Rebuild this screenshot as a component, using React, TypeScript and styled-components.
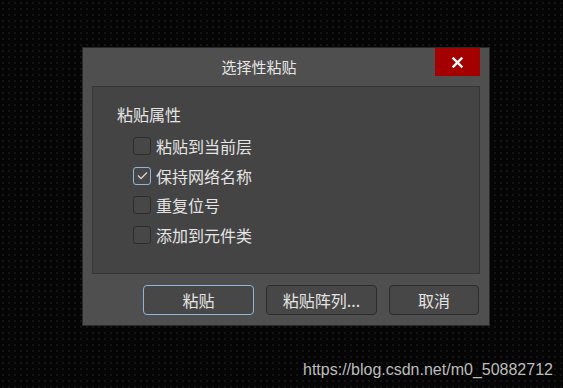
import React from "react";
import styled, { createGlobalStyle } from "styled-components";

const Global = createGlobalStyle`
  *, *::before, *::after { box-sizing: border-box; }
  html, body { margin: 0; padding: 0; }
  body {
    width: 563px;
    height: 388px;
    overflow: hidden;
    background-color: #050505;
    background-image: radial-gradient(circle, #141414 0.8px, transparent 1px);
    background-size: 6px 6px;
    font-family: "Noto Sans CJK SC", "Noto Sans", sans-serif;
  }
`;

const Page = styled.div`
  width: 563px;
  height: 388px;
  display: flex;
  flex-direction: column;
`;

const Dialog = styled.div`
  margin: 47px 0 0 82px;
  width: 408px;
  height: 279px;
  background: #4f4f4f;
  border: 1px solid #2a2a2a;
  display: flex;
  flex-direction: column;
  padding: 0 9px 0 9px;
`;

const TitleBar = styled.div`
  height: 38px;
  display: flex;
  align-items: flex-start;
  margin-left: -9px;
`;

const Title = styled.div`
  flex: 1;
  text-align: center;
  color: #e6e6e6;
  font-size: 15px;
  line-height: 20px;
  margin-top: 9px;
`;

const CloseButton = styled.div`
  width: 45px;
  height: 28px;
  background: #a50000;
  display: flex;
  align-items: center;
  justify-content: center;
`;

const GroupBox = styled.div`
  height: 188px;
  background: #444444;
  border: 1px solid #363636;
  padding: 17px 0 0 24px;
  display: flex;
  flex-direction: column;
`;

const GroupTitle = styled.div`
  color: #e4e4e4;
  font-size: 16px;
  line-height: 20px;
  margin-bottom: 13px;
`;

const List = styled.div`
  display: flex;
  flex-direction: column;
  gap: 11px;
  padding-left: 16px;
`;

const Row = styled.label`
  display: flex;
  align-items: center;
  gap: 5px;
  height: 18.5px;
  color: #e4e4e4;
  font-size: 16px;
`;

const Box = styled.span<{ $checked?: boolean }>`
  width: 18px;
  height: 18px;
  border-radius: 3px;
  background: #474747;
  border: 1px solid ${(p) => (p.$checked ? "#8fb6da" : "#2c2c2c")};
  display: flex;
  align-items: center;
  justify-content: center;
`;

const Buttons = styled.div`
  display: flex;
  justify-content: flex-end;
  gap: 12px;
  margin-top: 11px;
  padding-right: 1px;
`;

const Button = styled.div<{ $width: number; $default?: boolean }>`
  width: ${(p) => p.$width}px;
  height: 30px;
  border-radius: 4px;
  background: #474747;
  border: 1px solid ${(p) => (p.$default ? "#8fb6da" : "#2c2c2c")};
  color: #e4e4e4;
  font-size: 16px;
  display: flex;
  align-items: center;
  justify-content: center;
`;

const Watermark = styled.div`
  margin: 35px 0 0 303px;
  font-family: "Liberation Sans", Arial, sans-serif;
  font-size: 16px;
  color: #bdbdbd;
  line-height: 18px;
`;

const items = [
  { label: "粘贴到当前层", checked: false },
  { label: "保持网络名称", checked: true },
  { label: "重复位号", checked: false },
  { label: "添加到元件类", checked: false },
];

export default function App() {
  return (
    <Page>
      <Global />
      <Dialog>
        <TitleBar>
          <Title>选择性粘贴</Title>
          <CloseButton>
            <svg width="11" height="11" viewBox="0 0 11 11">
              <path d="M1.5 1.5 L9.5 9.5 M9.5 1.5 L1.5 9.5" stroke="#ffffff" strokeWidth="2.4" strokeLinecap="square" />
            </svg>
          </CloseButton>
        </TitleBar>
        <GroupBox>
          <GroupTitle>粘贴属性</GroupTitle>
          <List>
            {items.map((it) => (
              <Row key={it.label}>
                <Box $checked={it.checked}>
                  {it.checked && (
                    <svg width="11" height="9" viewBox="0 0 11 9">
                      <path d="M1 4.5 L4 7.5 L10 1.5" stroke="#d4d4d4" strokeWidth="1.3" fill="none" />
                    </svg>
                  )}
                </Box>
                {it.label}
              </Row>
            ))}
          </List>
        </GroupBox>
        <Buttons>
          <Button $width={111} $default>粘贴</Button>
          <Button $width={111}>粘贴阵列...</Button>
          <Button $width={90}>取消</Button>
        </Buttons>
      </Dialog>
      <Watermark>https://blog.csdn.net/m0_50882712</Watermark>
    </Page>
  );
}
